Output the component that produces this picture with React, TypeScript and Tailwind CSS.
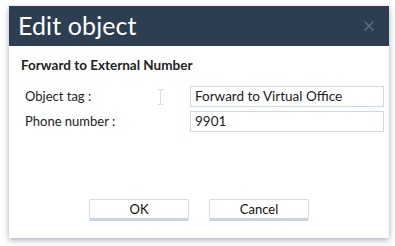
import { X } from 'lucide-react';

export default function App() {
  return (
    <div className="w-[395px] h-[246px] bg-white pt-[6px] pl-[9px]" style={{ fontFamily: 'Lato, "Open Sans", sans-serif' }}>
      <div className="w-[380px] h-[232px] bg-white flex flex-col shadow-[0_2px_6px_rgba(60,70,90,0.45)]">
        {/* Header */}
        <div className="h-[40px] bg-[#2c3e50] flex items-center justify-between pl-[9px] pr-[12px]">
          <h1 className="text-[25px] leading-none text-white tracking-[0.1px] -mt-[1px]">Edit object</h1>
          <X size={16} strokeWidth={2.5} className="text-[#5e6e7f]" />
        </div>

        {/* Body */}
        <div className="flex-1 flex flex-col pl-[12px] pr-[5px] pt-[9px]">
          <h2 className="text-[13.5px] font-bold text-[#222]">Forward to External Number</h2>
          <div className="mt-[11px] flex flex-col gap-[4px] pl-[4px]">
            <div className="flex items-center">
              <span className="w-[132px] shrink-0 text-[13px] text-[#222]">Object tag :</span>
              <span className="w-[33px] shrink-0">
                {/* mouse text cursor */}
                <svg width="7" height="16" viewBox="0 0 7 16" className="text-[#dcdcdc]">
                  <path d="M0.5 0.5h2.5l0.5 0.5l0.5-0.5h2.5M3.5 1v14M0.5 15.5h2.5l0.5-0.5l0.5 0.5h2.5" fill="none" stroke="currentColor" strokeWidth="1" />
                </svg>
              </span>
              <div className="w-[194px] shrink-0 h-[21px] border border-[#cfd9e6] px-[4px] text-[13.5px] leading-[19px] text-[#222]">
                Forward to Virtual Office
              </div>
            </div>
            <div className="flex items-center">
              <span className="w-[165px] shrink-0 text-[13px] text-[#222]">Phone number :</span>
              <div className="w-[194px] shrink-0 h-[21px] border border-[#cfd9e6] px-[4px] text-[13.5px] leading-[19px] text-[#222]">
                9901
              </div>
            </div>
          </div>

          {/* Buttons */}
          <div className="mt-auto mb-[17px] flex gap-[20px] pl-[68px]">
            <button className="w-[100px] h-[22px] bg-white border border-[#d6dde6] border-b-[3px] border-b-[#c8d4e2] rounded-[2px] text-[13px] leading-none text-[#111]">
              OK
            </button>
            <button className="w-[100px] h-[22px] bg-white border border-[#d6dde6] border-b-[3px] border-b-[#c8d4e2] rounded-[2px] text-[13px] leading-none text-[#111]">
              Cancel
            </button>
          </div>
        </div>
      </div>
    </div>
  );
}
